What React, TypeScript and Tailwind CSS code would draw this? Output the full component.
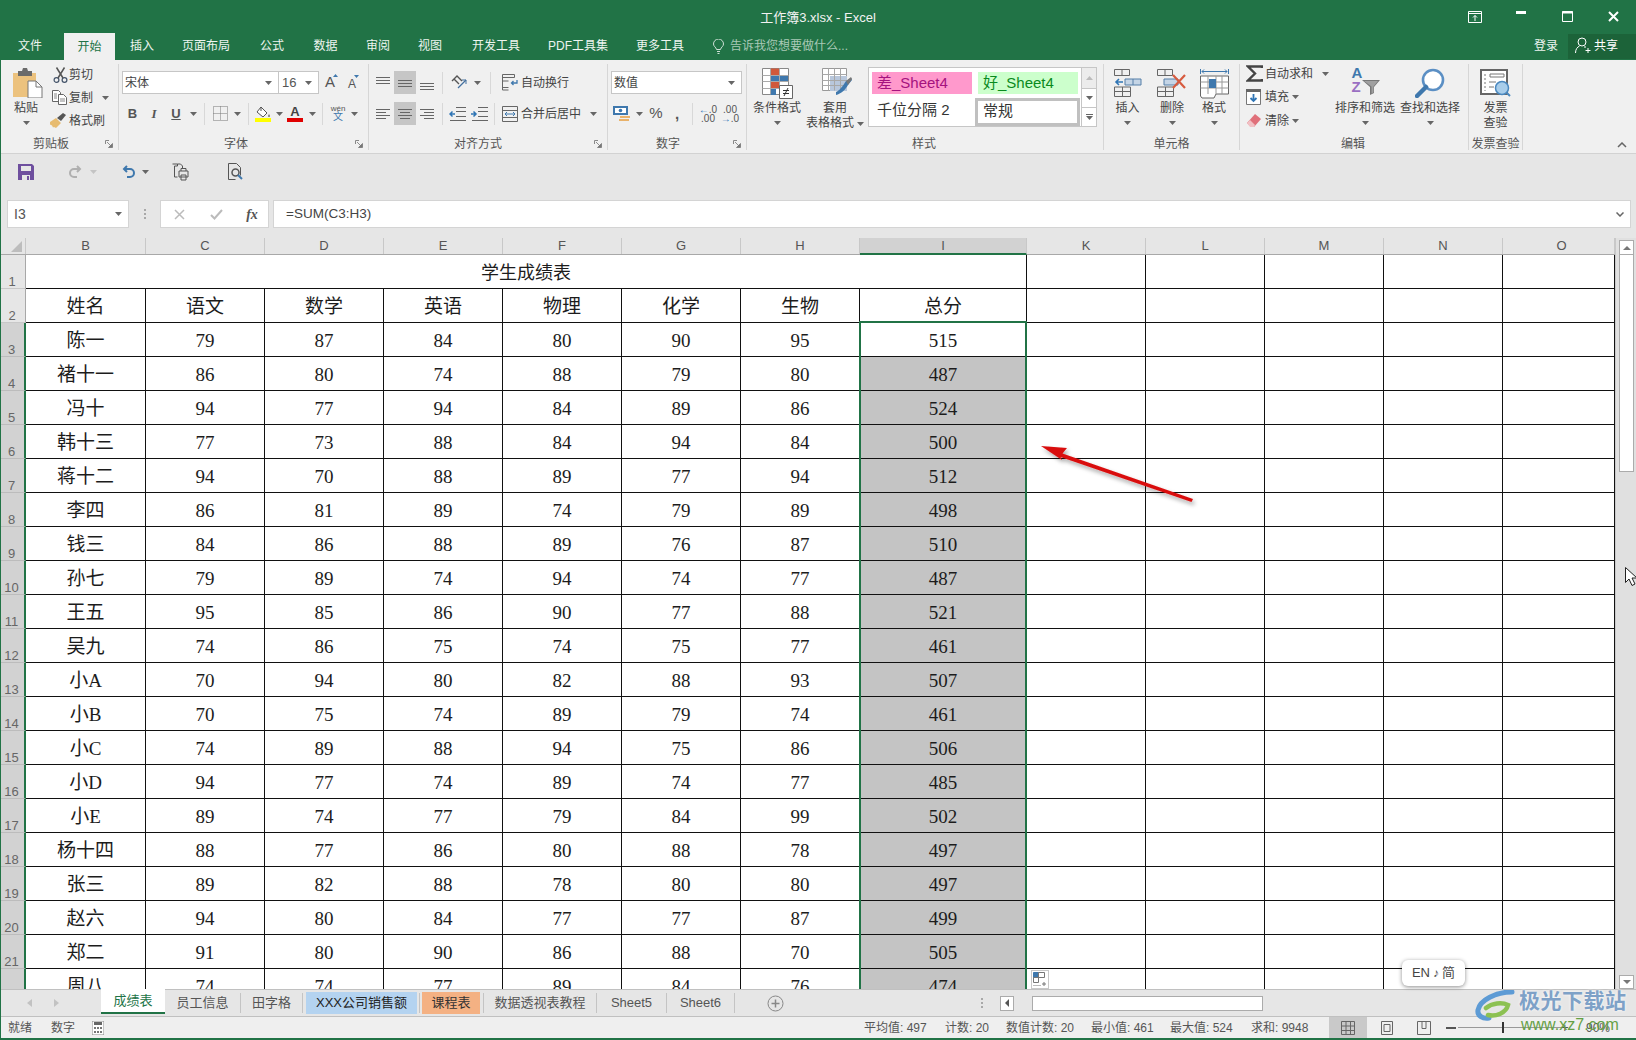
import React from 'react';

const rows: (string | number)[][] = [
  ['陈一',79,87,84,80,90,95,515],['褚十一',86,80,74,88,79,80,487],['冯十',94,77,94,84,89,86,524],['韩十三',77,73,88,84,94,84,500],
  ['蒋十二',94,70,88,89,77,94,512],['李四',86,81,89,74,79,89,498],['钱三',84,86,88,89,76,87,510],['孙七',79,89,74,94,74,77,487],
  ['王五',95,85,86,90,77,88,521],['吴九',74,86,75,74,75,77,461],['小A',70,94,80,82,88,93,507],['小B',70,75,74,89,79,74,461],
  ['小C',74,89,88,94,75,86,506],['小D',94,77,74,89,74,77,485],['小E',89,74,77,79,84,99,502],['杨十四',88,77,86,80,88,78,497],
  ['张三',89,82,88,78,80,80,497],['赵六',94,80,84,77,77,87,499],['郑二',91,80,90,86,88,70,505],['周八',74,74,77,89,84,76,474],
];
const W = ['w-[120px]','w-[119px]','w-[119px]','w-[119px]','w-[119px]','w-[119px]','w-[119px]','w-[167px]','w-[119px]','w-[119px]','w-[119px]','w-[119px]','w-[112px]'];
const LET = ['B','C','D','E','F','G','H','I','K','L','M','N','O'];

const Caret = ({ c = '#666' }: { c?: string }) => (
  <svg width="7" height="4" viewBox="0 0 7 4" className="shrink-0"><path d="M0 0h7L3.5 4z" fill={c} /></svg>
);
const Launcher = () => (
  <svg width="8" height="8" viewBox="0 0 8 8"><path d="M.5 4V.5H4" fill="none" stroke="#888" /><path d="M2 2l4 4M7.5 3.5v4h-4z" fill="#777" stroke="#777" strokeWidth=".8" /></svg>
);
const Sep = () => <div className="w-px h-[22px] bg-[#d8d8d8]" />;

const Group = ({ w, label, launcher, children, labelX }: { w: string; label: string; launcher?: boolean; children: React.ReactNode; labelX?: string }) => (
  <div className="flex h-[93px]">
    <div className={`${w} flex flex-col`}>
      <div className="h-[76px] flex">{children}</div>
      <div className={`h-[16px] flex items-center text-[12px] leading-none text-[#555] ${labelX ?? 'justify-center'}`}>
        <span>{label}</span>
        {launcher && <span className="ml-auto mr-[5px] flex"><Launcher /></span>}
      </div>
    </div>
    <div className="w-px h-[86px] mt-[4px] bg-[#d6d6d6]" />
  </div>
);

const Big = ({ w, icon, lines, caret = true }: { w: string; icon: React.ReactNode; lines: string[]; caret?: boolean }) => (
  <div className={`${w} flex flex-col items-center pt-[8px] text-[12px] leading-[15px] text-[#444] shrink-0`}>
    <div className="h-[30px] flex items-center justify-center">{icon}</div>
    <div className="mt-[3px] whitespace-nowrap">{lines[0]}</div>
    {lines[1] ? <div className="whitespace-nowrap flex items-center">{lines[1]}{caret && <span className="ml-[3px] flex"><Caret /></span>}</div>
      : caret && <div className="h-[13px] flex items-center"><Caret /></div>}
  </div>
);

const Lines = ({ ys }: { ys: [number, number, number][] }) => (
  <svg width="16" height="16" viewBox="0 0 16 16">{ys.map(([x1, x2, y], i) => <path key={i} d={`M${x1} ${y + .5}H${x2}`} stroke="#666" />)}</svg>
);

const IcoPaste = () => (
  <svg width="30" height="30" viewBox="0 0 30 30"><path d="M0 5h23v24H0z" fill="#ecc27e" /><path d="M5 3h4l1-3h4l1 3h4v5H5z" fill="#6b6b6b" /><path d="M15 13h8l6 6v11H15z" fill="#fff" stroke="#777" /><path d="M23 13v6h6" fill="none" stroke="#777" /></svg>
);
const IcoScissors = () => (
  <svg width="15" height="16" viewBox="0 0 15 16" fill="none" stroke="#44546a" strokeWidth="1.2"><circle cx="3.5" cy="13" r="2.4" /><circle cx="11.5" cy="13" r="2.4" /><path d="M5 11L11.5.5M10 11L3.5.5" stroke="#555" strokeWidth="1.5" /></svg>
);
const IcoCopy = () => (
  <svg width="15" height="15" viewBox="0 0 15 15" fill="#fff" stroke="#666"><path d="M.5.5h6l2 2v9h-8z" /><path d="M6.5 4.5h5l3 3v7h-8z" /><path d="M8 9h5M8 11h5M2 4h3M2 6h3M2 8h3" stroke="#888" /></svg>
);
const IcoBrush = () => (
  <svg width="17" height="15" viewBox="0 0 17 15"><path d="M0 9l6-4 5 5-5 5-2-1-1 .5-1-2-2-1z" fill="#e7bb70" /><path d="M7 5l6-5 3 2-5 6z" fill="#555" /></svg>
);
const IcoBucket = () => (
  <svg width="16" height="12" viewBox="0 0 16 12" fill="none"><path d="M6 1l6 6-4 4-6-5z" fill="#fff" stroke="#555" /><path d="M6 5V1" stroke="#555" /><path d="M14 8c1 2 1 3 0 3s-1-1 0-3z" fill="#555" /></svg>
);
const IcoBorder = () => (
  <svg width="15" height="15" viewBox="0 0 15 15" stroke="#777" strokeDasharray="1 1" fill="none"><path d="M.5.5h14v14H.5zM.5 7.5h14M7.5.5v14" /></svg>
);
const IcoOrient = () => (
  <svg width="18" height="16" viewBox="0 0 18 16" fill="none" stroke="#555"><path d="M2 6l5-5 5 5M4 4l5 5" strokeWidth="1.4" /><path d="M8 13L16 5" stroke="#44719f" strokeWidth="1.3" /><path d="M12 5h4v4" stroke="#44719f" /></svg>
);
const IcoWrap = () => (
  <svg width="16" height="17" viewBox="0 0 16 17" fill="none" stroke="#666"><path d="M.5.5h12v3H.5zM.5 7h6M.5 13.5h6M.5 3v13h6" /><path d="M15 6v3H9.5m2-2l-2 2 2 2" stroke="#3f78ad" strokeWidth="1.3" /></svg>
);
const IcoMerge = () => (
  <svg width="16" height="16" viewBox="0 0 16 16" fill="none" stroke="#666"><path d="M.5.5h15v15H.5zM.5 4.5h15M.5 11.5h15" /><path d="M3 8h10M5 6L3 8l2 2M11 6l2 2-2 2" stroke="#3f78ad" /></svg>
);
const IcoOutdent = () => (
  <svg width="17" height="14" viewBox="0 0 17 14" fill="none" stroke="#666"><path d="M7 .5h10M7 4.5h10M7 9.5h10M1 13.5h16" /><path d="M6 7H1m2.5-2.5L1 7l2.5 2.5" stroke="#2f75b5" strokeWidth="1.5" /></svg>
);
const IcoIndent = () => (
  <svg width="17" height="14" viewBox="0 0 17 14" fill="none" stroke="#666"><path d="M7 .5h10M7 4.5h10M7 9.5h10M1 13.5h16" /><path d="M0 7h5m-2.5-2.5L5 7 2.5 9.5" stroke="#2f75b5" strokeWidth="1.5" /></svg>
);
const IcoMoney = () => (
  <svg width="18" height="16" viewBox="0 0 18 16"><path d="M0 0h15v9H0z" fill="#3f78ad" /><path d="M2 2h11v5H2z" fill="#fff" /><circle cx="7.5" cy="4.5" r="1.8" fill="#3f78ad" /><path d="M7 10h10v2H7zM6 13h10v2H6z" fill="#e9b26a" /></svg>
);
const IcoCond = () => (
  <svg width="31" height="31" viewBox="0 0 31 31"><path d="M.5.5h26v26H.5z" fill="#fff" stroke="#888" /><path d="M8 .5h9v7H8z" fill="#d0593a" /><path d="M8 7h18v6H8z" fill="#3f78ad" /><path d="M8 13h9v7H8z" fill="#d0593a" /><path d="M8 20h6v7H8z" fill="#3f78ad" /><path d="M.5 7.5h26M.5 13.5h26M.5 20.5h26M8.5.5v26M17.5.5v26" stroke="#aaa" fill="none" /><path d="M17.5 17.5h13v13h-13z" fill="#fff" stroke="#666" /><path d="M21 22.5h6M21 25.5h6M26 20l-4 8" stroke="#333" fill="none" /></svg>
);
const IcoTable = () => (
  <svg width="30" height="31" viewBox="0 0 30 31"><path d="M.5.5h24v22H.5z" fill="#fff" stroke="#999" /><path d="M8 8h17v15H8z" fill="#b8c7dc" /><path d="M.5 6.5h24M.5 12.5h24M.5 17.5h24M6.5.5v22M12.5.5v22M18.5.5v22" stroke="#a8a8a8" fill="none" /><path d="M14 24c3-1 7-6 10-11l5-3 1 2-4 5c-2 4-7 9-12 10z" fill="#3f78ad" /><path d="M24 13l5-4 1 2-4 6z" fill="#777" /></svg>
);
const IcoInsert = () => (
  <svg width="28" height="28" viewBox="0 0 28 28" fill="none" stroke="#666"><path d="M.5.5h15v6H.5zM8 .5v6M.5 18h16v9.5H.5zM8.5 18v9.5M.5 22.500h16" /><path d="M11 10h16v6H11zM19 10v6" fill="#c5d5e6" stroke="#557fa8" /><path d="M9 13H2M5 10l-3 3 3 3" stroke="#2f75b5" strokeWidth="1.6" /></svg>
);
const IcoDelete = () => (
  <svg width="30" height="28" viewBox="0 0 30 28" fill="none" stroke="#666"><path d="M.5.500h15v6H.5zM8 .5v6M.5 18h16v9.5H.5zM8.5 18v9.500M.5 22.500h16" /><path d="M7 10h14v6H7z" fill="#c5d5e6" stroke="#557fa8" /><path d="M16 6l12 13M28 6L16 19" stroke="#d75b3f" strokeWidth="2.200" /></svg>
);
const IcoFormat = () => (
  <svg width="29" height="31" viewBox="0 0 29 31" fill="none" stroke="#666"><path d="M.5 1v5M28.500 1v5M2 3.500h25M2 3.500l2-2M2 3.500l2 2M27 3.500l-2-2M27 3.500l-2 2" stroke="#3f78ad" /><path d="M.5 8h28v18H16l-2 4H2l-1.500-2z" fill="#fff" /><path d="M8 8v18M16 8v18M22 8v18M.5 14h28M.5 20h28" stroke="#999" /><path d="M9 11h7v9H9z" fill="#3f78ad" stroke="none" /></svg>
);
const IcoSigma = () => (
  <svg width="17" height="17" viewBox="0 0 17 17" fill="none" stroke="#444" strokeWidth="2.400"><path d="M16 3V1.500H2L9 8.500 2 15.500h14V14" /></svg>
);
const IcoFill = () => (
  <svg width="15" height="16" viewBox="0 0 15 16"><path d="M.5.5h14v15H.5z" fill="#fff" stroke="#777" /><path d="M0 0h15v3H0z" fill="#666" /><path d="M7.500 5v7M4.500 9l3 3 3-3" stroke="#2f75b5" strokeWidth="1.800" fill="none" /></svg>
);
const IcoEraser = () => (
  <svg width="16" height="14" viewBox="0 0 16 14"><path d="M9 0l6 5-7 8-4-1-3-3z" fill="#e0707a" /><path d="M1 9l3-3 5 5-1 2H4z" fill="#f1c0c4" /></svg>
);
const IcoSort = () => (
  <svg width="31" height="30" viewBox="0 0 31 30"><path d="M12 12l8 0 0 0h10l-6 7v6l-4 2v-8z" fill="#777" /><path d="M14 13h14l-4.500 5.500v6l-2 1v-7z" fill="#a0a0a0" /></svg>
);
const IcoFind = () => (
  <svg width="30" height="30" viewBox="0 0 30 30" fill="none"><circle cx="18" cy="12" r="10" stroke="#5b8fc4" strokeWidth="2.600" fill="#fff" /><path d="M11 19L2 28" stroke="#3f78ad" strokeWidth="4.500" strokeLinecap="round" /></svg>
);
const IcoInvoice = () => (
  <svg width="31" height="29" viewBox="0 0 31 29" fill="none"><path d="M1 1h26v24H1z" fill="#fff" stroke="#666" strokeWidth="2" /><path d="M10 5h14v3H10z" stroke="#777" /><path d="M5 5v17" stroke="#777" strokeDasharray="2 2" /><path d="M9 13h7M9 18h5" stroke="#777" /><circle cx="22" cy="19" r="6.500" fill="#a8cdea" stroke="#4a88bf" strokeWidth="1.500" /><path d="M27 24l3 3" stroke="#4a88bf" strokeWidth="2" /></svg>
);

function TitleBar() {
  return (
    <div className="h-[34px] flex items-center text-white shrink-0">
      <div className="flex-1" />
      <div className="text-[13px] pt-[2px] text-[#f2f2f2]">工作簿3.xlsx - Excel</div>
      <div className="flex-1 flex justify-end">
        <div className="w-[46px] flex justify-center"><svg width="14" height="12" viewBox="0 0 14 12" fill="none" stroke="#fff"><path d="M.5 .5h13v11H.5zM.5 2.500h13" /><path d="M7 10V4.500M5 6.500l2-2 2 2" /></svg></div>
        <div className="w-[46px] flex justify-center"><svg width="10" height="3" viewBox="0 0 10 3"><path d="M0 0h10v3H0z" fill="#fff" /></svg></div>
        <div className="w-[47px] flex justify-center"><svg width="11" height="11" viewBox="0 0 11 11" fill="none" stroke="#fff"><path d="M.5 .5h10v10H.5z" /><path d="M0 1.500h11" strokeWidth="2" /></svg></div>
        <div className="w-[45px] flex justify-center"><svg width="11" height="11" viewBox="0 0 11 11" fill="none" stroke="#fff" strokeWidth="2"><path d="M1 1l9 9M10 1l-9 9" /></svg></div>
      </div>
    </div>
  );
}

function TabRow() {
  const tabs: [string, string][] = [['插入','w-[54px]'],['页面布局','w-[74px]'],['公式','w-[58px]'],['数据','w-[49px]'],['审阅','w-[56px]'],['视图','w-[48px]'],['开发工具','w-[84px]'],['PDF工具集','w-[80px]'],['更多工具','w-[84px]']];
  return (
    <div className="h-[26px] flex text-[12px] text-[#eef5f0] shrink-0">
      <div className="w-[60px] flex items-center justify-center pb-[2px]">文件</div>
      <div className="w-[4px]" />
      <div className="w-[51px] h-[27px] -mt-px flex items-center justify-center bg-[#f0f0f0] text-[#217346]">开始</div>
      {tabs.map(([t, w]) => <div key={t} className={`${w} flex items-center justify-center pb-[2px]`}>{t}</div>)}
      <div className="flex items-center pl-[11px] pb-[2px] text-[#a9c9b6]">
        <svg width="11" height="15" viewBox="0 0 11 15" fill="none" stroke="#cfe0d6"><path d="M3.500 10.500C3 8 .5 7.500.5 5a5 5 0 0 1 10 0c0 2.500-2.500 3-3 5.500zM4 12.500h3M4.500 14.500h2" /></svg>
        <span className="ml-[6px]">告诉我您想要做什么...</span>
      </div>
      <div className="flex-1" />
      <div className="w-[44px] flex items-center justify-center pb-[2px]">登录</div>
      <div className="w-[68px] h-[25px] bg-[#1c6339] flex items-center pl-[7px] pb-[2px] text-white">
        <svg width="16" height="17" viewBox="0 0 16 17" fill="none" stroke="#fff"><circle cx="7" cy="5" r="4" /><path d="M.5 16c0-4 2-6 4-7M9 10l2 0M13 11v5M10.500 13.500h5" /></svg>
        <span className="ml-[3px]">共享</span>
      </div>
    </div>
  );
}

const IC = ({ w, children }: { w: string; children?: React.ReactNode }) => (
  <div className={`${w} h-full flex items-center justify-center shrink-0`}>{children}</div>
);

function Ribbon() {
  return (
    <div className="h-[94px] flex bg-[#f0f0f0] border-b border-[#d2d2d2] shrink-0 text-[#444]">
      <Group w="w-[118px]" label="剪贴板" launcher labelX="pl-[33px]">
        <Big w="w-[52px]" icon={<span className="flex ml-[3px]"><IcoPaste /></span>} lines={['粘贴']} />
        <div className="flex flex-col pt-[3px] text-[12px]">
          <div className="h-[23px] flex items-center"><span className="w-[17px] flex pl-px"><IcoScissors /></span>剪切</div>
          <div className="h-[23px] flex items-center"><span className="w-[17px] flex"><IcoCopy /></span>复制<span className="ml-[9px] flex"><Caret /></span></div>
          <div className="h-[23px] flex items-center"><span className="w-[17px] flex -ml-[2px]"><IcoBrush /></span><span className="ml-[2px]">格式刷</span></div>
        </div>
      </Group>
      <Group w="w-[249px]" label="字体" launcher labelX="pl-[105px]">
        <div className="flex flex-col pl-[3px]">
          <div className="flex h-[23px] mt-[11px] items-center">
            <div className="w-[157px] h-[23px] bg-white border border-[#c6c6c6] flex items-center pl-[2px] pr-[6px] text-[12px] text-[#444]"><span className="flex-1">宋体</span><Caret /></div>
            <div className="w-[40px] h-[23px] bg-white border-y border-r border-[#c6c6c6] flex items-center pl-[3px] pr-[6px] text-[13px] text-[#555]"><span className="flex-1">16</span><Caret /></div>
            <IC w="w-[22px]"><span className="text-[15px] text-[#555] relative">A<svg width="5" height="3" viewBox="0 0 5 3" className="absolute -right-[3px] top-[3px]"><path d="M2.500 0l2.500 3H0z" fill="#3f78ad" /></svg></span></IC>
            <IC w="w-[22px]"><span className="text-[12px] text-[#555] relative pt-[2px]">A<svg width="5" height="3" viewBox="0 0 5 3" className="absolute -right-[3px] top-[2px]"><path d="M0 0h5L2.500 3z" fill="#3f78ad" /></svg></span></IC>
          </div>
          <div className="flex h-[23px] mt-[8px] items-center text-[#555]">
            <IC w="w-[21px]"><span className="text-[13px] font-bold">B</span></IC>
            <IC w="w-[22px]"><span className="text-[13px] font-bold italic font-['Liberation_Serif',serif]">I</span></IC>
            <IC w="w-[22px]"><span className="text-[13px] font-bold underline">U</span></IC>
            <IC w="w-[12px]"><Caret /></IC>
            <IC w="w-[10px]"><Sep /></IC>
            <IC w="w-[22px]"><IcoBorder /></IC>
            <IC w="w-[12px]"><Caret /></IC>
            <IC w="w-[10px]"><Sep /></IC>
            <IC w="w-[20px]"><div className="flex flex-col items-center"><IcoBucket /><div className="w-[16px] h-[4px] bg-[#ffff00]" /></div></IC>
            <IC w="w-[12px]"><Caret /></IC>
            <IC w="w-[20px]"><div className="flex flex-col items-center -mt-px"><span className="text-[13px] font-bold leading-[13px] text-[#444]">A</span><div className="w-[16px] h-[4px] bg-[#e00000]" /></div></IC>
            <IC w="w-[14px]"><Caret /></IC>
            <IC w="w-[7px]"><Sep /></IC>
            <IC w="w-[24px]"><div className="flex flex-col items-center leading-none"><span className="text-[8px] text-[#555]">wén</span><span className="text-[10px] text-[#3f78ad] -mt-px">文</span></div></IC>
            <IC w="w-[8px]"><Caret /></IC>
          </div>
        </div>
      </Group>
      <Group w="w-[238px]" label="对齐方式" launcher labelX="pl-[85px]">
        <div className="flex flex-col pl-[3px]">
          <div className="flex h-[23px] mt-[11px] items-center">
            <IC w="w-[22px]"><Lines ys={[[1,15,2],[1,15,5],[1,15,8]]} /></IC>
            <IC w="w-[22px]"><div className="w-full h-full bg-[#c6c6c6] flex items-center justify-center"><Lines ys={[[1,15,5],[1,15,8],[1,15,11]]} /></div></IC>
            <IC w="w-[22px]"><Lines ys={[[1,15,8],[1,15,11],[1,15,14]]} /></IC>
            <IC w="w-[8px]"><Sep /></IC>
            <IC w="w-[26px]"><IcoOrient /></IC>
            <IC w="w-[10px]"><Caret /></IC>
            <IC w="w-[16px]"><Sep /></IC>
            <IC w="w-[23px]"><IcoWrap /></IC>
            <span className="text-[12px] whitespace-nowrap">自动换行</span>
          </div>
          <div className="flex h-[23px] mt-[8px] items-center">
            <IC w="w-[22px]"><Lines ys={[[1,15,3],[1,11,6],[1,15,9],[1,11,12]]} /></IC>
            <IC w="w-[22px]"><div className="w-full h-full bg-[#c6c6c6] flex items-center justify-center"><Lines ys={[[1,15,3],[3,13,6],[1,15,9],[3,13,12]]} /></div></IC>
            <IC w="w-[22px]"><Lines ys={[[1,15,3],[5,15,6],[1,15,9],[5,15,12]]} /></IC>
            <IC w="w-[8px]"><Sep /></IC>
            <IC w="w-[22px]"><IcoOutdent /></IC>
            <IC w="w-[22px]"><IcoIndent /></IC>
            <IC w="w-[8px]"><Sep /></IC>
            <IC w="w-[23px]"><IcoMerge /></IC>
            <span className="text-[12px] whitespace-nowrap">合并后居中</span>
            <span className="ml-[9px] flex"><Caret /></span>
          </div>
        </div>
      </Group>
      <Group w="w-[138px]" label="数字" launcher labelX="pl-[48px]">
        <div className="flex flex-col pl-[3px]">
          <div className="w-[131px] h-[23px] mt-[11px] bg-white border border-[#c6c6c6] flex items-center pl-[2px] pr-[6px] text-[12px]"><span className="flex-1">数值</span><Caret /></div>
          <div className="flex h-[23px] mt-[8px] items-center text-[#555]">
            <IC w="w-[22px]"><IcoMoney /></IC>
            <IC w="w-[12px]"><Caret /></IC>
            <IC w="w-[22px]"><span className="text-[15px]">%</span></IC>
            <IC w="w-[20px]"><span className="text-[15px] font-bold leading-none">,</span></IC>
            <IC w="w-[10px]"><Sep /></IC>
            <IC w="w-[22px]"><span className="text-[10px] leading-[9px] text-center text-[#555]"><span className="text-[#2f75b5]">←</span>.0<br />.00</span></IC>
            <IC w="w-[22px]"><span className="text-[10px] leading-[9px] text-center text-[#555]">.00<br /><span className="text-[#2f75b5]">→</span>.0</span></IC>
          </div>
        </div>
      </Group>
      <Group w="w-[356px]" label="样式" labelX="pl-[165px]">
        <Big w="w-[60px]" icon={<IcoCond />} lines={['条件格式']} />
        <div className="w-[60px] shrink-0 flex flex-col items-center pt-[8px] text-[12px] leading-[15px] text-[#444]">
          <div className="h-[30px] flex items-center"><IcoTable /></div>
          <div className="mt-[3px] -ml-[4px]">套用</div>
          <div className="whitespace-nowrap flex items-center -ml-[4px]">表格格式<span className="ml-[3px] flex"><Caret /></span></div>
        </div>
        <div className="ml-[1px] mt-[7px] h-[60px] flex">
          <div className="w-[214px] h-[60px] bg-white border border-[#c6c6c6] grid grid-cols-[106px_106px] text-[15px] pl-[3px]">
            <div className="mt-[4px] w-[100px] h-[22px] bg-[#ff99cc] text-[#a5127f] flex items-center pl-[5px]">差_Sheet4</div>
            <div className="mt-[4px] w-[100px] h-[22px] bg-[#ccffcc] text-[#0a8a1e] flex items-center pl-[5px]">好_Sheet4</div>
            <div className="flex items-center pl-[5px] text-[#333]">千位分隔 2</div>
            <div className="-ml-[3px] mt-[3px] w-[105px] h-[28px] border-[3px] border-[#c0c0c0] flex items-center pl-[5px] text-[#333]">常规</div>
          </div>
          <div className="w-[15px] h-[60px] flex flex-col border-y border-r border-[#c6c6c6] bg-white">
            <div className="h-[21px] bg-[#ececec] border-b border-[#c6c6c6] flex items-center justify-center"><svg width="7" height="4" viewBox="0 0 7 4"><path d="M3.500 0L7 4H0z" fill="#bbb" /></svg></div>
            <div className="h-[19px] border-b border-[#c6c6c6] flex items-center justify-center"><Caret /></div>
            <div className="flex-1 flex flex-col items-center justify-center gap-[1px]"><div className="w-[7px] h-px bg-[#666]" /><Caret /></div>
          </div>
        </div>
      </Group>
      <Group w="w-[135px]" label="单元格">
        <Big w="w-[47px]" icon={<IcoInsert />} lines={['插入']} />
        <Big w="w-[42px]" icon={<IcoDelete />} lines={['删除']} />
        <Big w="w-[42px]" icon={<IcoFormat />} lines={['格式']} />
      </Group>
      <Group w="w-[228px]" label="编辑" labelX="pl-[101px]">
        <div className="w-[92px] flex flex-col pt-[2px] pl-[6px] text-[12px] shrink-0">
          <div className="h-[23px] flex items-center"><span className="w-[19px] flex"><IcoSigma /></span>自动求和<span className="ml-[9px] flex"><Caret /></span></div>
          <div className="h-[24px] flex items-center"><span className="w-[19px] flex"><IcoFill /></span>填充<span className="ml-[3px] flex"><Caret /></span></div>
          <div className="h-[23px] flex items-center"><span className="w-[19px] flex"><IcoEraser /></span>清除<span className="ml-[3px] flex"><Caret /></span></div>
        </div>
        <Big w="w-[66px]" icon={<div className="relative w-[31px] h-[30px] flex"><IcoSort /><div className="absolute left-[2px] top-[-2px] flex flex-col text-[15px] leading-[14px] font-bold"><span className="text-[#3f78ad]">A</span><span className="text-[#9a6fc2]">Z</span></div></div>} lines={['排序和筛选']} />
        <Big w="w-[64px]" icon={<IcoFind />} lines={['查找和选择']} />
      </Group>
      <Group w="w-[53px]" label="发票查验">
        <Big w="w-[53px]" icon={<IcoInvoice />} lines={['发票', '查验']} caret={false} />
      </Group>
      <div className="flex-1 flex items-end justify-end pr-[9px] pb-[5px]">
        <svg width="10" height="6" viewBox="0 0 10 6" fill="none" stroke="#666" strokeWidth="1.500"><path d="M1 5l4-4 4 4" /></svg>
      </div>
    </div>
  );
}

function Toolbar() {
  return (
    <div className="h-[84px] bg-[#e6e6e6] flex flex-col shrink-0">
      <div className="h-[36px] flex items-center">
        <IC w="w-[52px]"><svg width="16" height="16" viewBox="0 0 16 16"><path d="M0 0h14l2 2v14H0z" fill="#6e4f9e" /><path d="M3 2h10v5H3z" fill="#e6e6e6" /><path d="M4 11h8v5H4z" fill="#e6e6e6" /><path d="M9 12h2v4H9z" fill="#6e4f9e" /></svg></IC>
        <div className="w-[8px]" />
        <IC w="w-[30px]"><svg width="15" height="14" viewBox="0 0 15 14" fill="none" stroke="#b0b0b0" strokeWidth="2"><path d="M12 4H6a4 4 0 0 0 0 8h3M9 1l3 3-3 3" /></svg></IC>
        <IC w="w-[6px]"><Caret c="#c4c4c4" /></IC>
        <div className="w-[19px]" />
        <IC w="w-[26px]"><svg width="15" height="14" viewBox="0 0 15 14" fill="none" stroke="#3f78ad" strokeWidth="2"><path d="M3 4h6a4 4 0 0 1 0 8H6M6 1L3 4l3 3" /></svg></IC>
        <IC w="w-[8px]"><Caret /></IC>
        <div className="w-[13px]" />
        <IC w="w-[36px]"><svg width="17" height="18" viewBox="0 0 17 18" fill="none" stroke="#555"><path d="M.5 1h5v2h-3v11h3" /><path d="M5.500 1l3 0 2 2v4" /><path d="M7 8h9v6H7zM9 8V5.500h5V8M9 12h5v5H9z" fill="#e6e6e6" /></svg></IC>
        <div className="w-[19px]" />
        <IC w="w-[36px]"><svg width="15" height="18" viewBox="0 0 15 18" fill="none" stroke="#555"><path d="M.5 .5h8l4 4v8M.5 .5v16h7" /><circle cx="7.500" cy="9.500" r="3.500" strokeWidth="1.500" /><path d="M10 12l4 4" strokeWidth="2" stroke="#3f78ad" /></svg></IC>
      </div>
      <div className="h-[10px]" />
      <div className="h-[28px] flex">
        <div className="ml-[7px] w-[122px] bg-white border border-[#d4d4d4] flex items-center pl-[6px] pr-[6px] text-[14px] text-[#555]"><span className="flex-1">I3</span><Caret /></div>
        <div className="w-[31px] flex flex-col items-center justify-center gap-[2px]">{[0,1,2].map(i => <div key={i} className="w-[2px] h-[2px] bg-[#a8a8a8]" />)}</div>
        <div className="w-[109px] bg-white border border-[#d4d4d4] flex items-center">
          <IC w="w-[36px]"><svg width="11" height="11" viewBox="0 0 11 11" stroke="#bbb" strokeWidth="1.500"><path d="M1 1l9 9M10 1l-9 9" /></svg></IC>
          <IC w="w-[38px]"><svg width="13" height="11" viewBox="0 0 13 11" fill="none" stroke="#bbb" strokeWidth="2"><path d="M1 6l3.500 3.500L12 1" /></svg></IC>
          <IC w="w-[34px]"><span className="font-['Liberation_Serif',serif] italic text-[14px] text-[#555] font-bold">fx</span></IC>
        </div>
        <div className="ml-[4px] mr-[5px] flex-1 bg-white border border-[#d4d4d4] flex items-center pl-[12px] pr-[6px] text-[13.500px] text-[#444]">
          <span className="flex-1">=SUM(C3:H3)</span>
          <svg width="8" height="5" viewBox="0 0 8 5" fill="none" stroke="#666" strokeWidth="1.500"><path d="M.5 .5L4 4 7.500 .5" /></svg>
        </div>
      </div>
    </div>
  );
}

function SheetGrid() {
  return (
    <div className="flex-1 min-w-0 flex flex-col overflow-hidden">
      <div className="h-[17px] flex bg-[#e6e6e6] border-b border-[#a8a8a8] shrink-0 text-[13px] text-[#555]">
        <div className="w-[26px] border-r border-[#c8c8c8] flex items-center justify-end pr-[3px]">
          <svg width="11" height="11" viewBox="0 0 11 11"><path d="M11 0v11H0z" fill="#bdbdbd" /></svg>
        </div>
        {LET.map((l, i) => (
          <div key={l} className={`${W[i]} flex items-center justify-center border-r border-[#c8c8c8] ${l === 'I' ? 'bg-[#d2d2d2] border-b-2 border-b-[#217346] h-[17px]' : ''} ${l === 'O' ? 'pl-[6px]' : ''}`}>{l}</div>
        ))}
      </div>
      <div className="flex flex-col font-['Liberation_Serif','Noto_Sans_CJK_SC',serif] text-[19px] text-[#1c1c1c]">
        <Row n={1} sel={false}>
          <div className="w-[1001px] border-r border-b border-[#111] flex items-center justify-center pt-[3px] text-[18px]">学生成绩表</div>
          {W.slice(8).map((w, i) => <div key={i} className={`${w} border-r border-b border-[#111]`} />)}
        </Row>
        <Row n={2} sel={false}>
          {['姓名','语文','数学','英语','物理','化学','生物','总分'].map((t, i) => (
            <div key={t} className={`${W[i]} border-r border-b border-[#111] flex items-center justify-center pt-[4px]`}>{t}</div>
          ))}
          {W.slice(8).map((w, i) => <div key={i} className={`${w} border-r border-b border-[#111]`} />)}
        </Row>
        {rows.map((r, ri) => (
          <Row key={ri} n={ri + 3} sel>
            {r.map((t, i) => (
              <div key={i} className={`${W[i]} border-r border-b border-[#111] flex items-center justify-center pt-[4px] ${i === 7 && ri > 0 ? 'bg-[#c4c4c4]' : ''}`}>{t}</div>
            ))}
            {W.slice(8).map((w, i) => <div key={i} className={`${w} border-r border-b border-[#111]`} />)}
          </Row>
        ))}
      </div>
    </div>
  );
}

function Row({ n, sel, children }: { n: number; sel: boolean; children: React.ReactNode }) {
  return (
    <div className="flex h-[34px] shrink-0">
      <div className={`w-[26px] shrink-0 flex items-end justify-center pr-[1px] border-b text-[13px] leading-[13px] font-['Liberation_Sans',sans-serif] text-[#666] ${sel ? 'bg-[#d2d2d2] border-r-2 border-r-[#217346] border-b-[#bcbcbc]' : 'bg-[#e6e6e6] border-r border-r-[#a8a8a8] border-b-[#c8c8c8]'}`}>{n}</div>
      {children}
    </div>
  );
}

function VScroll() {
  return (
    <div className="w-[21px] bg-[#e0e0e0] border-l border-[#c8c8c8] flex flex-col pl-[3px] pt-[2px] shrink-0">
      <div className="w-[15px] h-[15px] bg-white border border-[#ababab] flex items-center justify-center"><svg width="8" height="4" viewBox="0 0 8 4"><path d="M4 0l4 4H0z" fill="#777" /></svg></div>
      <div className="w-[15px] h-[217px] bg-white border-x border-b border-[#ababab]" />
      <div className="flex-1" />
      <div className="w-[15px] h-[14px] bg-white border border-[#ababab] flex items-center justify-center"><svg width="8" height="4" viewBox="0 0 8 4"><path d="M0 0h8L4 4z" fill="#777" /></svg></div>
    </div>
  );
}

function SheetTabs() {
  const plain = (t: string, w: string) => <div className={`${w} flex items-center justify-center text-[#555] border-r border-[#c4c4c4] h-[20px]`}>{t}</div>;
  return (
    <div className="h-[28px] bg-[#e6e6e6] border-t border-b border-[#c0c0c0] flex items-center text-[13px] shrink-0">
      <div className="w-[101px] flex pl-[27px] gap-[22px]">
        <svg width="5" height="8" viewBox="0 0 5 8"><path d="M5 0v8L0 4z" fill="#c2c2c2" /></svg>
        <svg width="5" height="8" viewBox="0 0 5 8"><path d="M0 0v8l5-4z" fill="#c2c2c2" /></svg>
      </div>
      <div className="w-[64px] h-[25px] -mt-[1px] self-start bg-white border-b-2 border-[#217346] text-[#217346] flex items-center justify-center">成绩表</div>
      {plain('员工信息', 'w-[76px]')}
      {plain('田字格', 'w-[62px]')}
      <div className="ml-[3px] w-[111px] h-[22px] bg-[#b4d3f0] text-[#222] flex items-center justify-center">XXX公司销售额</div>
      <div className="ml-[2px] w-px h-[20px] bg-[#c4c4c4]" />
      <div className="ml-[2px] w-[58px] h-[22px] bg-[#f4b183] text-[#333] flex items-center justify-center">课程表</div>
      <div className="ml-[3px] w-px h-[20px] bg-[#c4c4c4]" />
      {plain('数据透视表教程', 'w-[113px]')}
      {plain('Sheet5', 'w-[70px]')}
      {plain('Sheet6', 'w-[68px]')}
      <div className="ml-[32px]">
        <svg width="17" height="17" viewBox="0 0 17 17" fill="none" stroke="#888"><circle cx="8.500" cy="8.500" r="7.500" /><path d="M8.500 4.500v8M4.500 8.500h8" strokeWidth="1.500" /></svg>
      </div>
      <div className="ml-[197px] flex flex-col gap-[2px]">{[0,1,2].map(i => <div key={i} className="w-[2px] h-[2px] bg-[#a8a8a8]" />)}</div>
      <div className="ml-[17px] w-[14px] h-[15px] bg-white border border-[#ababab] flex items-center justify-center"><svg width="4" height="8" viewBox="0 0 4 8"><path d="M4 0v8L0 4z" fill="#555" /></svg></div>
      <div className="ml-[18px] w-[231px] h-[15px] bg-white border border-[#ababab]" />
    </div>
  );
}

function StatusBar() {
  const stats: [string, string][] = [['平均值: 497','w-[81px]'],['计数: 20','w-[61px]'],['数值计数: 20','w-[85px]'],['最小值: 461','w-[79px]'],['最大值: 524','w-[81px]'],['求和: 9948','w-[78px]']];
  return (
    <div className="h-[23px] bg-[#efefef] border-b-2 border-[#217346] flex items-center text-[12px] text-[#555] shrink-0">
      <div className="w-[40px] text-center">就绪</div>
      <div className="w-[46px] text-center">数字</div>
      <svg width="12" height="14" viewBox="0 0 12 14" className="ml-[6px]"><path d="M0 0h12v14H0z" fill="#fff" stroke="#888" /><path d="M2 1h8v3H2z" fill="#666" /><path d="M2 6h2v2H2zM5 6h2v2H5zM8 6h2v2H8zM2 10h2v2H2zM5 10h2v2H5zM8 10h2v2H8z" fill="#777" /></svg>
      <div className="ml-[760px] flex">{stats.map(([s, w]) => <span key={s} className={`${w} whitespace-nowrap`}>{s}</span>)}</div>
      <div className="w-[38px] h-full bg-[#c9c9c9] flex items-center justify-center">
        <svg width="14" height="14" viewBox="0 0 14 14" fill="none" stroke="#666"><path d="M.5 .5h13v13H.5zM.5 5h13M.5 9.500h13M5 .5v13M9.500 .5v13" /></svg>
      </div>
      <IC w="w-[40px]"><svg width="12" height="14" viewBox="0 0 12 14" fill="none" stroke="#666"><path d="M.5 .5h11v13H.5zM3 3.500h6v7H3z" /></svg></IC>
      <IC w="w-[34px]"><svg width="14" height="14" viewBox="0 0 14 14" fill="none" stroke="#666"><path d="M.5 .5h13v13H.5zM5 .5v7h4v-7" /></svg></IC>
      <span className="ml-[5px] w-[10px] h-[2px] bg-[#555]" />
    </div>
  );
}

export default function App() {
  return (
    <div className="relative w-[1636px] h-[1040px] overflow-hidden flex flex-col bg-[#217346] font-['Liberation_Sans','Noto_Sans_CJK_SC',sans-serif]">
      <TitleBar />
      <TabRow />
      <Ribbon />
      <Toolbar />
      <div className="h-[751px] flex bg-white shrink-0">
        <SheetGrid />
        <VScroll />
      </div>
      <SheetTabs />
      <StatusBar />

      {/* overlays */}
      <div className="absolute left-0 top-[60px] w-px h-[980px] bg-[#217346]" />
      <div className="absolute left-[859px] top-[321px] w-[168px] h-[668px] border-x-2 border-t-2 border-[#217346]" />
      <svg className="absolute left-[1035px] top-[438px]" width="170" height="75" viewBox="0 0 170 75">
        <defs><filter id="s" x="-20%" y="-30%" width="140%" height="170%"><feDropShadow dx="2" dy="3" stdDeviation="2" floodColor="#000" floodOpacity=".35" /></filter></defs>
        <path d="M6 8L32 10 27.500 15.500 158 61 156.500 64 25.500 19 27 22z" fill="#d90f0f" filter="url(#s)" />
      </svg>
      <div className="absolute left-[1031px] top-[970px] w-[18px] h-[19px] bg-white border border-[#c8c8c8] flex items-center justify-center">
        <svg width="14" height="15" viewBox="0 0 14 15" fill="none" stroke="#777"><path d="M.5 .5h5v5h-5z" fill="#3f78ad" stroke="#3f78ad" /><path d="M5.500 .5h6v5h-6zM.5 5.500h5v5h-5z" /><path d="M.5 13.500h7" strokeDasharray="1 1" /><path d="M11 10v4M9 12h4" /></svg>
      </div>
      <div className="absolute left-[1402px] top-[960px] w-[63px] h-[26px] bg-white rounded-[6px] shadow-[0_1px_4px_rgba(0,0,0,.45)] flex items-center justify-center text-[13px] text-[#444]">EN<span className="mx-[3px] text-[12px]">♪</span>简</div>
      <svg className="absolute left-[1625px] top-[567px]" width="13" height="20" viewBox="0 0 13 20"><path d="M.5 .5v15l3.500-3.500 3 6.500 3-1.500-3-6h5z" fill="#fff" stroke="#222" /></svg>

      {/* page zoom slider + watermark */}
      <div className="absolute left-[1458px] top-[1027px] w-[107px] h-px bg-[#999]" />
      <div className="absolute left-[1502px] top-[1022px] w-[2px] h-[11px] bg-[#333]" />
      <div className="absolute left-[1561px] top-[1022px] text-[13px] leading-[11px] text-[#555]">+</div>
      <div className="absolute left-[1586px] top-[1019px] text-[12px] text-[#555]">90%</div>
      <svg className="absolute left-[1474px] top-[990px]" width="48" height="32" viewBox="0 0 48 32" fill="none">
        <path d="M38 2C22 2 6 10 4 20c-1 6 5 9 11 8" stroke="#5d9bd5" strokeWidth="5" strokeLinecap="round" />
        <path d="M12 18c6-5 16-6 22-3-2 8-12 12-20 10" stroke="#8cc152" strokeWidth="4.500" strokeLinecap="round" />
      </svg>
      <div className="absolute left-[1519px] top-[988px] text-[21px] leading-[26px] font-bold tracking-[0.5px] text-[#7ea1c7] [text-shadow:0_0_3px_#fff]">极光下载站</div>
      <div className="absolute left-[1521px] top-[1015px] text-[16px] leading-[20px] text-[#65a045]">www.xz7.com</div>
    </div>
  );
}
